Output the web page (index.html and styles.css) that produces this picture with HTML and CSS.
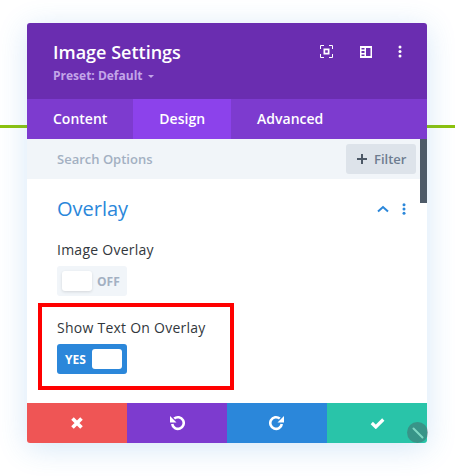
FILE: index.html
```html
<!DOCTYPE html>
<html lang="en">
<head>
<meta charset="utf-8">
<title>Image Settings</title>
<link rel="stylesheet" href="styles.css">
</head>
<body>
<div class="rule"></div>
<div class="modal">
  <header class="head">
    <div class="head-text">
      <h1 class="title">Image Settings</h1>
      <div class="preset">Preset: Default <span class="caret"></span></div>
    </div>
    <div class="head-icons">
      <svg class="icon" width="13" height="13" viewBox="0 0 13 13"><path d="M.5 4V.5H4M9 .5h3.500V4M12.500 9v3.500H9M4 12.500H.5V9" fill="none" stroke="#fff"/><path fill-rule="evenodd" d="M3.500 3.500h6v6h-6zM5.200 5.200v2.600h2.600V5.200z" fill="#fff"/></svg>
      <svg class="icon" width="12" height="12" viewBox="0 0 12 12"><path fill-rule="evenodd" d="M0 0h12v12H0zM6 2v8h4.500V2zM1.500 2v1.500h3V2zM1.500 5v2h3V5zM1.500 8.500V10h3V8.500z" fill="#fff"/></svg>
      <svg class="icon" width="4" height="13" viewBox="0 0 4 13"><circle cx="2" cy="2" r="1.500" fill="#fff"/><circle cx="2" cy="6.500" r="1.500" fill="#fff"/><circle cx="2" cy="11" r="1.500" fill="#fff"/></svg>
    </div>
  </header>
  <nav class="tabs">
    <div class="tab">Content</div>
    <div class="tab tab-active">Design</div>
    <div class="tab">Advanced</div>
  </nav>
  <div class="search">
    <span class="search-text">Search Options</span>
    <div class="filter"><span class="plus"></span>Filter</div>
  </div>
  <div class="body">
    <div class="thumb"></div>
    <div class="section-head">
      <h2 class="section-title">Overlay</h2>
      <div class="section-icons">
        <svg width="12" height="8" viewBox="0 0 12 8"><path d="M1 6.500l5-4.500 5 4.500" fill="none" stroke="#2b87da" stroke-width="2"/></svg>
        <svg width="4" height="12" viewBox="0 0 4 12"><circle cx="2" cy="1.700" r="1.500" fill="#2b87da"/><circle cx="2" cy="6" r="1.500" fill="#2b87da"/><circle cx="2" cy="10.300" r="1.500" fill="#2b87da"/></svg>
      </div>
    </div>
    <div class="field field-first">
      <div class="label">Image Overlay</div>
      <div class="toggle toggle-off"><span class="knob knob-off"></span><span class="off-text">OFF</span></div>
    </div>
    <div class="field field-marked">
      <div class="label">Show Text On Overlay</div>
      <div class="toggle toggle-on"><span class="on-text">YES</span><span class="knob"></span></div>
      <div class="marker"></div>
    </div>
  </div>
  <footer class="foot">
    <div class="btn btn-red"><svg width="14" height="14" viewBox="0 0 14 14"><path d="M2.500 2.500l9 9M11.500 2.500l-9 9" stroke="#fff" stroke-width="3.600" fill="none"/></svg></div>
    <div class="btn btn-purple"><svg width="16" height="16" viewBox="0 0 16 16"><path d="M3.200 9A5.800 5.800 0 1 0 5.200 3.600" fill="none" stroke="#fff" stroke-width="2.600"/><path d="M1 1v6.500h6.500z" fill="#fff"/></svg></div>
    <div class="btn btn-blue"><svg width="16" height="16" viewBox="0 0 16 16"><path d="M12.800 9A5.800 5.800 0 1 1 10.800 3.600" fill="none" stroke="#fff" stroke-width="2.600"/><path d="M15 1v6.500H8.500z" fill="#fff"/></svg></div>
    <div class="btn btn-green"><svg width="15" height="12" viewBox="0 0 15 12"><path d="M1.800 6l4 4 7.500-7.500" fill="none" stroke="#fff" stroke-width="3.200"/></svg></div>
    <div class="handle"><svg width="12" height="12" viewBox="0 0 12 12"><path d="M1.500 1.500l9 9" stroke="#7fd8c4" stroke-width="2" stroke-linecap="round"/></svg></div>
  </footer>
</div>
</body>
</html>
```
FILE: styles.css
```css
* { box-sizing: border-box; }
html, body { margin: 0; height: 100%; }
body {
  position: relative;
  background: #fff;
  padding: 23px 28px 0 27px;
  font-family: "Open Sans", sans-serif;
  overflow: hidden;
}
.rule {
  position: absolute;
  left: 0;
  right: 0;
  top: 125px;
  height: 3px;
  background: #8cc20d;
}
.modal {
  position: relative;
  width: 400px;
  height: 420px;
  border-radius: 3px;
  background: #fff;
  box-shadow: 0 5px 30px rgba(43, 135, 218, .2);
  display: flex;
  flex-direction: column;
}
.head {
  height: 76px;
  flex: none;
  background: #6a2db0;
  border-radius: 3px 3px 0 0;
  padding: 17px 25.5px 0 26px;
  display: flex;
  justify-content: space-between;
}
.title {
  margin: 0;
  font-size: 18px;
  line-height: 24px;
  font-weight: 600;
  color: #fff;
}
.preset {
  font-size: 12px;
  line-height: 16px;
  margin-top: 4px;
  font-weight: 700;
  color: #c3a5e8;
}
.caret {
  display: inline-block;
  vertical-align: 2px;
  margin-left: 2px;
  border: 3px solid transparent;
  border-top: 3px solid #c3a5e8;
  border-bottom: 0;
}
.head-icons {
  display: flex;
  align-items: center;
  align-self: flex-start;
  margin-top: 5px;
  height: 13px;
}
.head-icons .icon:nth-child(1) { margin-right: 27px; }
.head-icons .icon:nth-child(2) { margin-right: 25.5px; }
.tabs {
  height: 40px;
  flex: none;
  display: flex;
  background: #7d3bcf;
}
.tab {
  padding: 0 26px;
  font-size: 14px;
  font-weight: 600;
  line-height: 40px;
  color: #fff;
}
.tab-active { background: #8c42eb; }
.search {
  position: relative;
  height: 40px;
  flex: none;
  background: #f1f5f9;
  display: flex;
  align-items: center;
  justify-content: space-between;
  padding: 0 11px 0 30px;
}
.search-text {
  font-size: 13px;
  font-weight: 600;
  color: #a3b0c2;
}
.filter {
  width: 70px;
  height: 30px;
  background: #dde3ea;
  border-radius: 3px;
  display: flex;
  align-items: center;
  padding-left: 11px;
  gap: 7px;
  font-size: 13px;
  font-weight: 600;
  color: #6d7c90;
}
.plus {
  width: 10px;
  height: 10px;
  background:
    linear-gradient(#4c5866, #4c5866) center / 10px 2px no-repeat,
    linear-gradient(#4c5866, #4c5866) center / 2px 10px no-repeat;
}
.body {
  position: relative;
  flex: 1;
  background: #fff;
  padding: 0 30px;
}
.thumb {
  position: absolute;
  right: 0;
  top: -40px;
  width: 7px;
  height: 64px;
  background: #4d5a68;
}
.section-head {
  display: flex;
  justify-content: space-between;
  align-items: center;
  height: 30px;
  margin-top: 14px;
}
.section-title {
  margin: 0;
  font-size: 20px;
  font-weight: 400;
  color: #2b87da;
}
.section-icons {
  display: flex;
  align-items: center;
  gap: 13px;
  margin-right: -9px;
  margin-top: 2px;
}
.field { position: relative; }
.field-first { margin-top: 17px; }
.field-marked { margin-top: 22px; }
.label {
  font-size: 14px;
  line-height: 20px;
  font-weight: 500;
  letter-spacing: .25px;
  color: #32373c;
}
.toggle {
  width: 70px;
  height: 30px;
  margin-top: 6px;
  border-radius: 3px;
  display: flex;
  align-items: center;
  font-size: 12px;
  font-weight: 700;
}
.toggle-off { background: #f1f5f9; padding-left: 5px; }
.toggle-on { background: #2b87da; padding-right: 5px; justify-content: space-between; padding-left: 8px; }
.knob {
  width: 30px;
  height: 20px;
  border-radius: 3px;
  background: #fff;
}
.knob-off { box-shadow: 0 1px 3px rgba(0, 0, 0, .12); }
.off-text { color: #a3b0c2; margin-left: 5px; }
.on-text { color: #fff; }
.marker {
  position: absolute;
  left: -19px;
  top: -15px;
  width: 196px;
  height: 87px;
  border: 4px solid #f00;
}
.foot {
  position: relative;
  height: 40px;
  flex: none;
  display: flex;
}
.btn {
  width: 100px;
  display: flex;
  align-items: center;
  justify-content: center;
}
.btn-red { background: #ef5555; border-radius: 0 0 0 3px; }
.btn-purple { background: #7d3bcf; }
.btn-blue { background: #2b87da; }
.btn-green { background: #29c4a9; border-radius: 0 0 3px 0; }
.handle {
  position: absolute;
  right: -1px;
  bottom: 0;
  width: 21px;
  height: 21px;
  border-radius: 50%;
  background: rgba(70, 110, 110, .55);
  display: flex;
  align-items: center;
  justify-content: center;
}
```
